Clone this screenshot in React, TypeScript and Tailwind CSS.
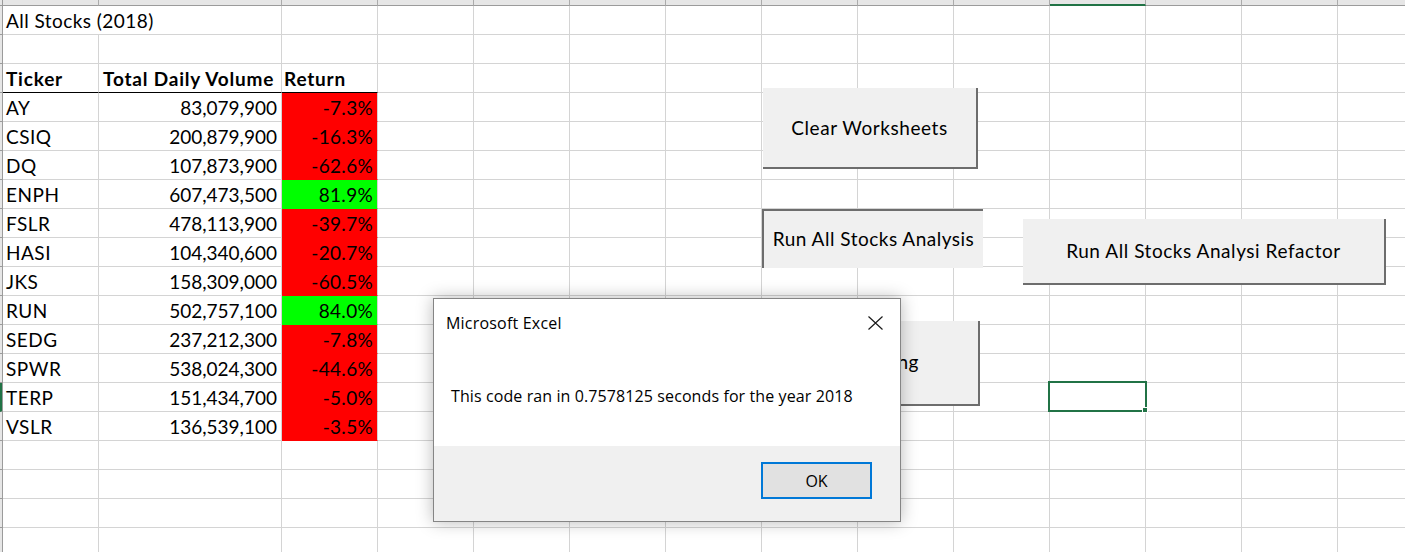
import React from "react";

const data: [string, string, string, boolean][] = [
  ["AY", "83,079,900", "-7.3%", false],
  ["CSIQ", "200,879,900", "-16.3%", false],
  ["DQ", "107,873,900", "-62.6%", false],
  ["ENPH", "607,473,500", "81.9%", true],
  ["FSLR", "478,113,900", "-39.7%", false],
  ["HASI", "104,340,600", "-20.7%", false],
  ["JKS", "158,309,000", "-60.5%", false],
  ["RUN", "502,757,100", "84.0%", true],
  ["SEDG", "237,212,300", "-7.8%", false],
  ["SPWR", "538,024,300", "-44.6%", false],
  ["TERP", "151,434,700", "-5.0%", false],
  ["VSLR", "136,539,100", "-3.5%", false],
];

const NCOLS = 14;
const NROWS = 19;

const base =
  "border-r border-b border-[#d4d4d4] leading-[28px] pt-px text-[19px] whitespace-nowrap text-black";

function Row({ r }: { r: number }) {
  const cells: React.ReactNode[] = [];
  if (r === 1) {
    cells.push(
      <div key="t" className={`${base} col-span-2 pl-[3px] tracking-[0.45px]`}>
        All Stocks (2018)
      </div>
    );
    for (let c = 2; c < NCOLS; c++) cells.push(<div key={c} className={base} />);
    return <>{cells}</>;
  }
  if (r === 3) {
    cells.push(
      <div key="a" className={`${base} border-b-black pl-[3px] font-bold tracking-[0.8px]`}>
        Ticker
      </div>
    );
    cells.push(
      <div key="b" className={`${base} border-b-black pl-[4px] font-bold tracking-[0.8px]`}>
        Total Daily Volume
      </div>
    );
    cells.push(
      <div key="c" className={`${base} border-b-black pl-[2px] font-bold tracking-[0.8px]`}>
        Return
      </div>
    );
    for (let c = 3; c < NCOLS; c++) cells.push(<div key={c} className={base} />);
    return <>{cells}</>;
  }
  if (r >= 4 && r <= 15) {
    const [t, v, ret, pos] = data[r - 4];
    cells.push(
      <div key="a" className={`${base} pl-[3px] tracking-[0.5px]`}>
        {t}
      </div>
    );
    cells.push(
      <div key="b" className={`${base} text-right pr-[4px]`}>
        {v}
      </div>
    );
    cells.push(
      <div
        key="c"
        className={`${base} text-right pr-[4px] tracking-[0.3px] ${
          pos ? "bg-[#00ff00] border-b-[#00ff00]" : "bg-[#ff0000] border-b-[#ff0000]"
        }`}
      >
        {ret}
      </div>
    );
    for (let c = 3; c < NCOLS; c++) cells.push(<div key={c} className={base} />);
    return <>{cells}</>;
  }
  for (let c = 0; c < NCOLS; c++) cells.push(<div key={c} className={base} />);
  return <>{cells}</>;
}

export default function App() {
  const rows = Array.from({ length: NROWS }, (_, i) => i + 1);
  const cols = Array.from({ length: NCOLS }, (_, i) => i);
  return (
    <div className="relative w-[1405px] h-[552px] overflow-hidden bg-white font-['Lato',sans-serif]">
      {/* column header strip */}
      <div className="flex">
        <div className="w-[3px] h-[6px] shrink-0 bg-[#e6e6e6] border-r border-b border-[#9b9b9b]" />
        {cols.map((c) => (
          <div
            key={c}
            className={`${c === 1 ? "w-[183px]" : "w-[96px]"} h-[6px] shrink-0 bg-[#e6e6e6] border-r border-r-[#ababab] ${
              c === 10 ? "border-b-2 border-b-[#217346]" : "border-b border-b-[#9b9b9b]"
            }`}
          />
        ))}
      </div>
      <div className="flex">
        {/* row header strip */}
        <div className="flex flex-col shrink-0">
          {rows.map((r) => (
            <div
              key={r}
              className={`w-[3px] h-[29px] bg-[#e6e6e6] border-r border-b border-[#9b9b9b] ${
                r === 14 ? "border-l-2 border-l-[#217346]" : ""
              }`}
            />
          ))}
        </div>
        <div className="grid grid-cols-[96px_183px_repeat(12,96px)] auto-rows-[29px] shrink-0">
          {rows.map((r) => (
            <Row key={r} r={r} />
          ))}
        </div>
      </div>

      {/* selected cell */}
      <div className="absolute left-[1048px] top-[381px] w-[99px] h-[31px] border-2 border-[#217346]" />
      <div className="absolute left-[1142px] top-[407px] w-[6px] h-[6px] bg-[#217346] border border-white" />

      {/* form buttons */}
      <div className="absolute left-[763px] top-[88px] w-[215px] h-[81px] bg-[#f0f0f0] border-r-2 border-b-2 border-[#6d6d6d] flex items-center justify-center pt-px text-[19px] tracking-[0.55px] text-black">
        Clear Worksheets
      </div>
      <div className="absolute left-[762px] top-[209px] w-[221px] h-[59px] bg-[#f0f0f0] border-l-2 border-t-2 border-[#6d6d6d] flex items-center justify-center text-[19px] tracking-[0.5px] text-black">
        Run All Stocks Analysis
      </div>
      <div className="absolute left-[1023px] top-[219px] w-[363px] h-[66px] bg-[#f0f0f0] border-r-2 border-b-2 border-[#6d6d6d] flex items-center justify-center pt-px text-[19px] tracking-[0.55px] text-black">
        Run All Stocks Analysi Refactor
      </div>
      <div className="absolute left-[763px] top-[321px] w-[217px] h-[85px] bg-[#f0f0f0] border-r-2 border-b-2 border-[#6d6d6d] flex items-center justify-end pr-[59px] text-[19px] tracking-[0.5px] text-black">
        Formatting
      </div>

      {/* dialog */}
      <div className="absolute left-[433px] top-[298px] w-[468px] h-[224px] bg-white border border-[#858585] shadow-[0_0_16px_rgba(0,0,0,0.28)] flex flex-col font-['Open_Sans',sans-serif] text-black">
        <div className="h-[47px] flex items-center justify-between pl-[12px] pr-[17px]">
          <span className="text-[16px] tracking-[0.2px]">Microsoft Excel</span>
          <svg width="15" height="14" viewBox="0 0 15 14" className="shrink-0">
            <path d="M0.5 0.5 L14.5 13.5 M14.5 0.5 L0.5 13.5" stroke="#1a1a1a" strokeWidth="1.2" fill="none" />
          </svg>
        </div>
        <div className="flex-1 flex items-center pl-[17px] text-[16px] tracking-[0.1px]">
          This code ran in 0.7578125 seconds for the year 2018
        </div>
        <div className="h-[75px] bg-[#f0f0f0] flex justify-end items-start pt-[16px] pr-[28px]">
          <div className="w-[111px] h-[37px] border-2 border-[#0078d7] bg-[#e1e1e1] flex items-center justify-center text-[16px]">
            OK
          </div>
        </div>
      </div>
    </div>
  );
}
